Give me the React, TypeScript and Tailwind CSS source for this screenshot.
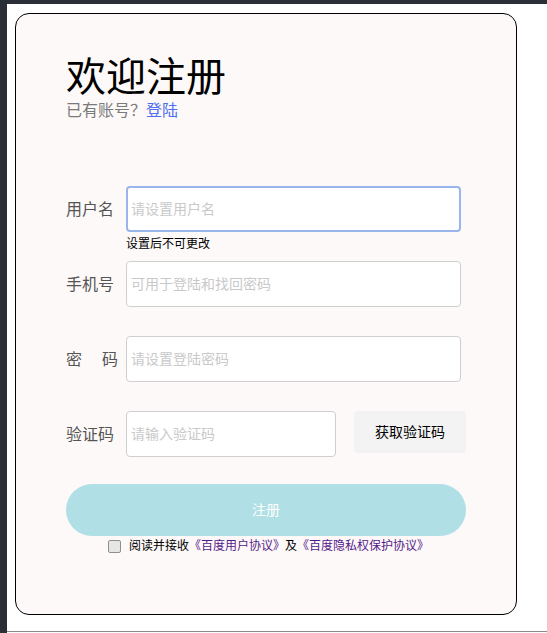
import { useState } from 'react';

const font = "font-['Liberation_Sans','Noto_Sans_CJK_SC',sans-serif]";

function Field({ label, placeholder, focused, spaced }: { label: string; placeholder: string; focused?: boolean; spaced?: boolean }) {
    return (
        <div className="flex items-center">
            <div className={spaced ? "w-[52px] pt-[2px] flex justify-between text-[16px] text-[#555]" : "w-[60px] pt-[2px] text-[16px] text-[#555]"}>
                {spaced ? (<><span>{label[0]}</span><span>{label[1]}</span></>) : label}
            </div>
            {spaced && <div className="w-[8px]" />}
            <input
                placeholder={placeholder}
                className={
                    "w-[335px] h-[46px] rounded-[4px] bg-white text-[14px] outline-none placeholder:text-[#c9c9c9] " +
                    (focused ? "border-2 border-[#9ab5ec] px-[3px]" : "border border-[#cfcfcf] px-[4px]")
                }
            />
        </div>
    );
}

export default function App() {
    const [agree, setAgree] = useState(false);

    return (
        <div className={`${font} w-[547px] h-[633px] flex bg-white overflow-hidden`}>
            <div className="w-[7px] bg-[#2a2e37]" />
            <div className="flex-1 flex flex-col">
                <div className="h-[4px] bg-[#2a2e37]" />
                <div className="flex-1 pl-[8px] pt-[9px] border-b border-[#8a8a8a] mb-[1px]">
                    <div className="w-[502px] h-[602px] rounded-[14px] border border-black bg-[#fdf9f8] pl-[50px] pt-[41px]">
                        <h1 className="text-[40px] leading-[44px] text-black">欢迎注册</h1>
                        <p className="mt-[2px] text-[16px] leading-[20px] text-[#7a7a7a]">
                            已有账号？<a className="text-[#4f6ef2]">登陆</a>
                        </p>

                        <div className="mt-[65px] w-[400px]">
                            <Field label="用户名" placeholder="请设置用户名" focused />
                            <p className="ml-[60px] mt-[4px] text-[12px] leading-[16px] text-black">设置后不可更改</p>
                            <div className="h-[9px]" />
                            <Field label="手机号" placeholder="可用于登陆和找回密码" />
                            <div className="h-[29px]" />
                            <Field label="密码" placeholder="请设置登陆密码" spaced />
                            <div className="h-[29px]" />
                            <div className="flex items-start">
                                <div className="w-[60px] h-[46px] pt-[2px] flex items-center text-[16px] text-[#555]">验证码</div>
                                <input
                                    placeholder="请输入验证码"
                                    className="w-[210px] h-[46px] rounded-[4px] border border-[#cfcfcf] bg-white px-[4px] text-[14px] outline-none placeholder:text-[#c9c9c9]"
                                />
                                <button className="ml-[18px] w-[112px] h-[42px] rounded-[4px] bg-[#f3f3f3] text-[14px] text-black">
                                    获取验证码
                                </button>
                            </div>

                            <button className="mt-[27px] w-[400px] h-[52px] rounded-full bg-[#b0dfe5] text-[14px] text-white">
                                注册
                            </button>

                            <div className="mt-[2px] pl-[5px] flex items-center justify-center text-[12px] leading-[16px]">
                                <span
                                    onClick={() => setAgree(!agree)}
                                    className={"w-[13px] h-[13px] rounded-[2px] border border-[#8f8f8f] " + (agree ? "bg-[#3b82f6]" : "bg-[#e6e6e6]")}
                                />
                                <span className="ml-[8px] text-black">阅读并接收</span>
                                <a className="text-[#551a8b]">《百度用户协议》</a>
                                <span className="text-black">及</span>
                                <a className="text-[#551a8b]">《百度隐私权保护协议》</a>
                            </div>
                        </div>
                    </div>
                </div>
            </div>
        </div>
    );
}
